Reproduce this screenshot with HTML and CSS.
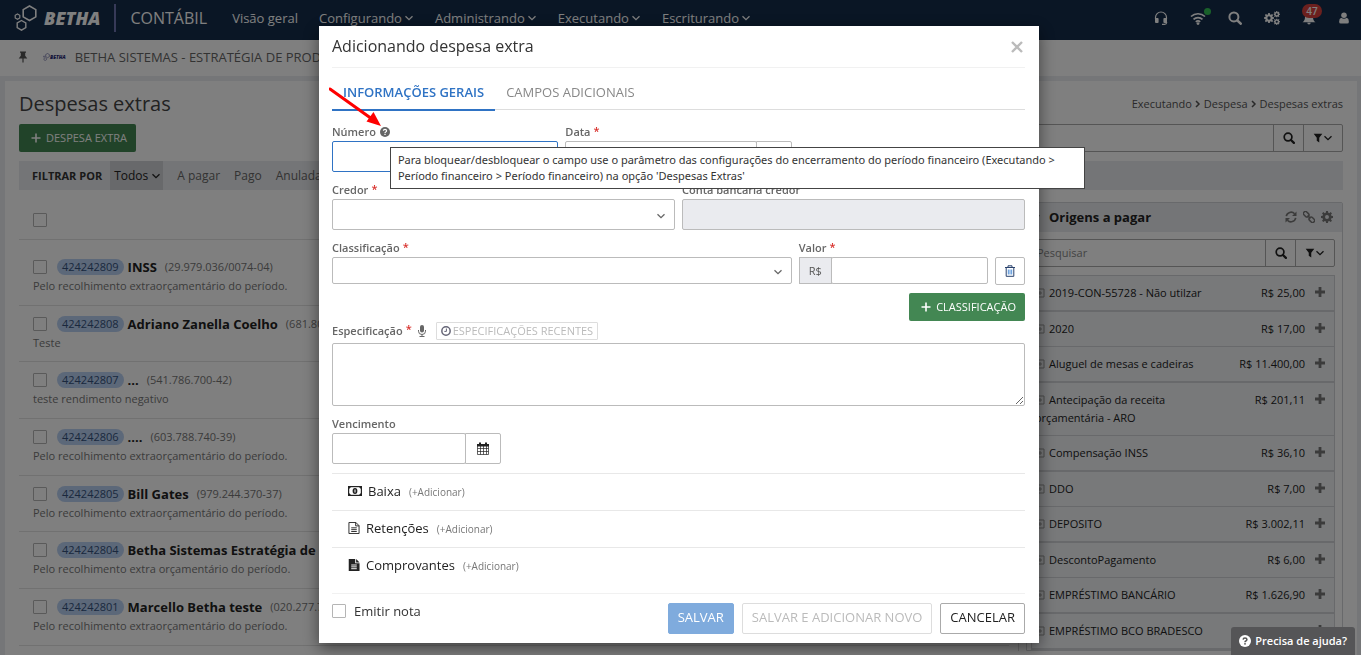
FILE: index.html
```html
<!DOCTYPE html>
<html lang="pt-BR">
<head>
<meta charset="utf-8">
<meta name="viewport" content="width=device-width, initial-scale=1">
<title>Despesas extras - Contábil</title>
<link rel="stylesheet" href="styles.css">
</head>
<body>
<svg class="sprite" aria-hidden="true">
  <symbol id="chevron" viewBox="0 0 10 10"><path d="M1.500 3.200 5 6.700 8.500 3.200" fill="none" stroke="currentColor" stroke-width="1.300"/></symbol>
  <symbol id="crumb" viewBox="0 0 8 10"><path d="M2 2 5 5 2 8" fill="none" stroke="currentColor" stroke-width="1.500"/></symbol>
  <symbol id="plus" viewBox="0 0 10 10"><path d="M5 .5v9M.5 5h9" fill="none" stroke="currentColor" stroke-width="1.600"/></symbol>
  <symbol id="plus-bold" viewBox="0 0 10 10"><path d="M5 0v10M0 5h10" fill="none" stroke="currentColor" stroke-width="2.800"/></symbol>
  <symbol id="search" viewBox="0 0 14 14"><circle cx="5.900" cy="5.900" r="4.500" fill="none" stroke="currentColor" stroke-width="2"/><path d="m9.300 9.300 3.400 3.400" stroke="currentColor" stroke-width="2.600" stroke-linecap="round"/></symbol>
  <symbol id="filter" viewBox="0 0 12 12"><path d="M.8 1h10.400L7.500 5.600V11.500L4.500 9.200V5.600Z" fill="currentColor"/></symbol>
  <symbol id="hexes" viewBox="0 0 24 26"><g fill="none" stroke="currentColor"><path d="m15.500 1 6.300 3.600v7.300l-6.300 3.600-6.300-3.600V4.600Z" stroke-width="1.600"/><path d="m7.500 15.500 4.300 2.500v4.700l-4.300 2.500-4.300-2.500V18Z" stroke-width="1.400"/><path d="m3.500 9 2.300 1.300v2.600l-2.300 1.300-2.300-1.300v-2.600Z" stroke-width="1.200"/></g></symbol>
  <symbol id="gear" viewBox="0 0 14 14"><path fill="currentColor" fill-rule="evenodd" d="M5.900 0h2.200l.4 2 1.100.5L11.300 1.300l1.500 1.500L11.600 4.500l.5 1.100 1.900.3v2.200l-1.900.4-.5 1.100 1.200 1.700-1.500 1.500-1.700-1.200-1.100.5-.4 1.900H5.900l-.4-1.900-1.100-.5-1.700 1.200-1.500-1.500 1.200-1.700-.5-1.100L0 8.100V5.900l1.900-.3.5-1.100L1.200 2.800l1.500-1.500 1.700 1.200 1.100-.5ZM7 4.700a2.300 2.300 0 1 0 0 4.600 2.300 2.300 0 0 0 0-4.600Z"/></symbol>
  <symbol id="box-plus" viewBox="0 0 10 10"><path d="M1 1h8v8H1ZM5 3v4M3 5h4" fill="none" stroke="currentColor"/></symbol>
</svg>

<header class="topbar">
  <a class="brand" href="#"><svg class="brand-mark"><use href="#hexes"/></svg><span class="brand-name">BETHA</span></a>
  <span class="product">CONTÁBIL</span>
  <nav class="menu">
    <a href="#">Visão geral</a>
    <a href="#">Configurando<svg class="i10"><use href="#chevron"/></svg></a>
    <a href="#">Administrando<svg class="i10"><use href="#chevron"/></svg></a>
    <a href="#">Executando<svg class="i10"><use href="#chevron"/></svg></a>
    <a href="#">Escriturando<svg class="i10"><use href="#chevron"/></svg></a>
  </nav>
  <div class="tools">
    <button type="button" aria-label="Suporte"><svg class="i14" viewBox="0 0 14 14"><path d="M1.500 8V6.500a5.500 5.500 0 0 1 11 0V8M12.600 11v.8q0 1.500-2 1.500H8" fill="none" stroke="currentColor" stroke-width="1.200"/><rect x="1" y="7" width="3.600" height="5" rx="1" fill="currentColor"/><rect x="9.400" y="7" width="3.600" height="5" rx="1" fill="currentColor"/></svg></button>
    <button type="button" aria-label="Conexão"><svg class="i16" viewBox="0 0 16 14"><path d="M1 5.500a10.300 10.300 0 0 1 14 0M3.500 8.300a6.600 6.600 0 0 1 9 0M5.800 10.800a3.300 3.300 0 0 1 4.400 0" fill="none" stroke="currentColor" stroke-width="1.700"/><circle cx="8" cy="12.600" r="1.400" fill="currentColor"/></svg><span class="dot"></span></button>
    <button type="button" aria-label="Buscar"><svg class="i14"><use href="#search"/></svg></button>
    <button type="button" aria-label="Configurações"><svg class="i16" viewBox="0 0 16 14"><use href="#gear" x="0" y="2" width="10" height="10"/><use href="#gear" x="9.500" y="0" width="6.500" height="6.500"/><use href="#gear" x="9.500" y="7.500" width="6.500" height="6.500"/></svg></button>
    <button type="button" aria-label="Notificações"><svg class="i14" viewBox="0 0 14 14"><path d="M7 1.500c3 0 4 2 4 4.500 0 3 1 4.200 2.500 5.200H.5C2 10.200 3 9 3 6c0-2.500 1-4.500 4-4.500ZM5.300 11.800h3.400a1.700 1.700 0 0 1-3.400 0Z" fill="currentColor"/></svg><span class="count">47</span></button>
    <button type="button" aria-label="Usuário"><svg class="i12" viewBox="0 0 12 13"><circle cx="6" cy="3.500" r="3" fill="currentColor"/><path d="M3 6.200q3 2.200 6 0 2.300.8 2.300 4.300 0 2-1.800 2h-7q-1.800 0-1.800-2Q.7 7 3 6.200Z" fill="currentColor"/></svg></button>
  </div>
</header>

<div class="entity">
  <svg class="i12" viewBox="0 0 12 12"><path d="M3 .5h6v1.300H8.200v3L10.300 7.500H6.600v4H5.400v-4H1.700l2.100-2.700v-3H3Z" fill="currentColor"/></svg>
  <span class="mini-logo"><svg class="mini-mark"><use href="#hexes"/></svg><b>BETHA</b></span>
  <span class="entity-name">BETHA SISTEMAS - ESTRATÉGIA DE PRODUTO</span>
</div>

<main class="page">
  <div class="page-head">
    <h1>Despesas extras</h1>
    <nav class="crumbs"><a href="#">Executando</a><svg><use href="#crumb"/></svg><a href="#">Despesa</a><svg><use href="#crumb"/></svg><a href="#">Despesas extras</a></nav>
  </div>
  <div class="toolbar">
    <button type="button" class="btn btn-green"><svg class="i10"><use href="#plus"/></svg>DESPESA EXTRA</button>
    <div class="search wide">
      <input type="search" aria-label="Pesquisar despesas">
      <button type="button" aria-label="Pesquisar"><svg class="i12"><use href="#search"/></svg></button>
      <button type="button" class="flt" aria-label="Filtros"><svg class="i10"><use href="#filter"/></svg><svg class="i10"><use href="#chevron"/></svg></button>
    </div>
  </div>
  <div class="filters">
    <strong>FILTRAR POR</strong>
    <button type="button" class="on">Todos<svg class="i10"><use href="#chevron"/></svg></button>
    <button type="button">A pagar</button>
    <button type="button">Pago</button>
    <button type="button">Anulada</button>
  </div>

  <div class="columns">
    <section class="list">
      <div class="list-head"><input type="checkbox" aria-label="Selecionar todas"></div>
      <ul class="rows">
        <li><div class="row-top"><input type="checkbox" aria-label="424242809"><span class="tag">424242809</span><b>INSS</b><span class="doc">(29.979.036/0074-04)</span></div><p>Pelo recolhimento extraorçamentário do período.</p></li>
        <li><div class="row-top"><input type="checkbox" aria-label="424242808"><span class="tag">424242808</span><b>Adriano Zanella Coelho</b><span class="doc">(681.803.210-04)</span></div><p>Teste</p></li>
        <li><div class="row-top"><input type="checkbox" aria-label="424242807"><span class="tag">424242807</span><b>...</b><span class="doc">(541.786.700-42)</span></div><p>teste rendimento negativo</p></li>
        <li><div class="row-top"><input type="checkbox" aria-label="424242806"><span class="tag">424242806</span><b>....</b><span class="doc">(603.788.740-39)</span></div><p>Pelo recolhimento extraorçamentário do período.</p></li>
        <li><div class="row-top"><input type="checkbox" aria-label="424242805"><span class="tag">424242805</span><b>Bill Gates</b><span class="doc">(979.244.370-37)</span></div><p>Pelo recolhimento extraorçamentário do período.</p></li>
        <li><div class="row-top"><input type="checkbox" aria-label="424242804"><span class="tag">424242804</span><b>Betha Sistemas Estratégia de ...</b></div><p>Pelo recolhimento extra orçamentário do período.</p></li>
        <li><div class="row-top"><input type="checkbox" aria-label="424242801"><span class="tag">424242801</span><b>Marcello Betha teste</b><span class="doc">(020.277.710-50)</span></div><p>Pelo recolhimento extraorçamentário do período.</p></li>
      </ul>
    </section>

    <aside class="origins">
      <div class="origins-head">
        <svg class="i10"><use href="#chevron"/></svg>
        <h2>Origens a pagar</h2>
        <button type="button" aria-label="Atualizar"><svg class="i12" viewBox="0 0 12 12"><path d="M1.300 5.200A4.800 4.800 0 0 1 9.600 2.800M10.700 6.800A4.800 4.800 0 0 1 2.400 9.200" fill="none" stroke="currentColor" stroke-width="1.600"/><path d="M11.500.5V5H7ZM.5 11.500V7H5Z" fill="currentColor"/></svg></button>
        <button type="button" aria-label="Vínculos"><svg class="i12" viewBox="0 0 12 12"><g fill="none" stroke="currentColor" stroke-width="1.500" transform="rotate(45 6 6)"><rect x="-1" y="4" width="6" height="4" rx="1.800"/><rect x="7" y="4" width="6" height="4" rx="1.800"/><path d="M4 6h4"/></g></svg></button>
        <button type="button" aria-label="Configurar"><svg class="i12"><use href="#gear"/></svg></button>
      </div>
      <div class="search">
        <input type="search" placeholder="Pesquisar" aria-label="Pesquisar origens">
        <button type="button" aria-label="Pesquisar"><svg class="i12"><use href="#search"/></svg></button>
        <button type="button" class="flt" aria-label="Filtros"><svg class="i10"><use href="#filter"/></svg><svg class="i10"><use href="#chevron"/></svg></button>
      </div>
      <ul class="accounts">
        <li><span class="acc"><svg class="i10"><use href="#box-plus"/></svg>2019-CON-55728 - Não utilzar</span><span>R$ 25,00</span><button type="button" aria-label="Adicionar"><svg class="i10"><use href="#plus-bold"/></svg></button></li>
        <li><span class="acc"><svg class="i10"><use href="#box-plus"/></svg>2020</span><span>R$ 17,00</span><button type="button" aria-label="Adicionar"><svg class="i10"><use href="#plus-bold"/></svg></button></li>
        <li><span class="acc"><svg class="i10"><use href="#box-plus"/></svg>Aluguel de mesas e cadeiras</span><span>R$ 11.400,00</span><button type="button" aria-label="Adicionar"><svg class="i10"><use href="#plus-bold"/></svg></button></li>
        <li><span class="acc"><svg class="i10"><use href="#box-plus"/></svg>Antecipação da receita orçamentária - ARO</span><span>R$ 201,11</span><button type="button" aria-label="Adicionar"><svg class="i10"><use href="#plus-bold"/></svg></button></li>
        <li><span class="acc"><svg class="i10"><use href="#box-plus"/></svg>Compensação INSS</span><span>R$ 36,10</span><button type="button" aria-label="Adicionar"><svg class="i10"><use href="#plus-bold"/></svg></button></li>
        <li><span class="acc"><svg class="i10"><use href="#box-plus"/></svg>DDO</span><span>R$ 7,00</span><button type="button" aria-label="Adicionar"><svg class="i10"><use href="#plus-bold"/></svg></button></li>
        <li><span class="acc"><svg class="i10"><use href="#box-plus"/></svg>DEPOSITO</span><span>R$ 3.002,11</span><button type="button" aria-label="Adicionar"><svg class="i10"><use href="#plus-bold"/></svg></button></li>
        <li><span class="acc"><svg class="i10"><use href="#box-plus"/></svg>DescontoPagamento</span><span>R$ 6,00</span><button type="button" aria-label="Adicionar"><svg class="i10"><use href="#plus-bold"/></svg></button></li>
        <li><span class="acc"><svg class="i10"><use href="#box-plus"/></svg>EMPRÉSTIMO BANCÁRIO</span><span>R$ 1.626,90</span><button type="button" aria-label="Adicionar"><svg class="i10"><use href="#plus-bold"/></svg></button></li>
        <li><span class="acc"><svg class="i10"><use href="#box-plus"/></svg>EMPRÉSTIMO BCO BRADESCO</span><span>R$ 11.500,43</span><button type="button" aria-label="Adicionar"><svg class="i10"><use href="#plus-bold"/></svg></button></li>
      </ul>
    </aside>
  </div>
</main>

<div class="overlay">
  <form class="modal" role="dialog" aria-labelledby="dlg-title">
    <div class="modal-head">
      <h2 id="dlg-title">Adicionando despesa extra</h2>
      <button type="button" class="close" aria-label="Fechar"><svg class="i12" viewBox="0 0 12 12"><path d="m1 1 10 10M11 1 1 11" stroke="currentColor" stroke-width="2.400"/></svg></button>
    </div>
    <div class="tabs" role="tablist">
      <button type="button" role="tab" class="active" aria-selected="true">INFORMAÇÕES GERAIS</button>
      <button type="button" role="tab" aria-selected="false">CAMPOS ADICIONAIS</button>
    </div>

    <div class="fields">
      <div class="field c2">
        <div class="label-line"><label for="numero">Número</label>
          <span class="help"><svg class="i10" viewBox="0 0 12 12"><circle cx="6" cy="6" r="6" fill="currentColor"/><path d="M4.100 4.600Q4.200 2.900 6 2.900t1.900 1.500Q7.900 5.400 6.800 6q-.8.400-.8 1.200" fill="none" stroke="#fff" stroke-width="1.500"/><rect x="5.200" y="8.100" width="1.600" height="1.500" fill="#fff"/></svg>
            <svg class="arrow" viewBox="0 0 56 42"><path d="m1 2 42 30" stroke="#fe0000" stroke-width="3" stroke-linecap="round"/><path d="m52 39-14.500-4.500L44.500 25Z" fill="#fe0000"/></svg>
            <span class="tooltip" role="tooltip">Para bloquear/desbloquear o campo use o parâmetro das configurações do encerramento do período financeiro (Executando &gt; Período financeiro &gt; Período financeiro) na opção 'Despesas Extras'</span>
          </span>
        </div>
        <input id="numero" type="text" class="focused">
      </div>
      <div class="field c2">
        <div class="label-line"><label for="data">Data</label><sup>*</sup></div>
        <div class="group"><input id="data" type="text"><button type="button" aria-label="Calendário"></button></div>
      </div>
      <div class="field c3 row2">
        <div class="label-line"><label for="credor">Credor</label><sup>*</sup></div>
        <div class="select"><select id="credor"><option></option></select><svg class="i10"><use href="#chevron"/></svg></div>
      </div>
      <div class="field c3">
        <div class="label-line"><label for="conta">Conta bancária credor</label></div>
        <input id="conta" type="text" disabled>
      </div>
      <div class="field c4 low">
        <div class="label-line"><label for="classif">Classificação</label><sup>*</sup></div>
        <div class="select"><select id="classif"><option></option></select><svg class="i10"><use href="#chevron"/></svg></div>
      </div>
      <div class="field c2 low">
        <div class="label-line"><label for="valor">Valor</label><sup>*</sup></div>
        <div class="value-row">
          <div class="group"><span class="prefix">R$</span><input id="valor" type="text"></div>
          <button type="button" class="trash" aria-label="Remover"><svg class="i12" viewBox="0 0 12 12"><path d="M1 2.500h10M4 2.300V.8h4v1.500M2.200 3v8.300h7.600V3" fill="none" stroke="currentColor"/><path d="M4.300 4.500v5M6 4.500v5M7.700 4.500v5" stroke="#4f8fd8"/></svg></button>
        </div>
      </div>
      <div class="add-row"><button type="button" class="btn btn-green"><svg class="i10"><use href="#plus"/></svg>CLASSIFICAÇÃO</button></div>
      <div class="field c6">
        <div class="label-line spec"><label for="espec">Especificação</label><sup>*</sup>
          <svg class="i12 mic" viewBox="0 0 12 12"><rect x="4" y="0" width="4" height="7.500" rx="2" fill="currentColor"/><path d="M2.500 5v1.200a3.500 3.300 0 0 0 7 0V5M6 9.500v2M3.500 11.500h5" fill="none" stroke="currentColor"/></svg>
          <button type="button" class="recent" disabled><svg class="i10" viewBox="0 0 12 12"><circle cx="6" cy="6" r="5" fill="none" stroke="currentColor" stroke-width="1.800"/><path d="M6.500 3v3.500H4" fill="none" stroke="currentColor" stroke-width="1.200"/></svg>ESPECIFICAÇÕES RECENTES</button>
        </div>
        <textarea id="espec"></textarea>
      </div>
      <div class="field c6">
        <div class="label-line"><label for="venc">Vencimento</label></div>
        <div class="group short"><input id="venc" type="text"><button type="button" aria-label="Calendário"><svg class="i14" viewBox="0 0 14 14"><path d="M1.500 3.500h11v9h-11ZM1.500 6.500h11M1.500 9.500h11M4.500 4v8.500M7.500 4v8.500M10.500 4v8.500" fill="none" stroke="currentColor" stroke-width=".7"/><path d="M1 2h12v2.500H1ZM3 .5h2v2H3ZM9 .5h2v2H9Z" fill="currentColor"/></svg></button></div>
      </div>
    </div>

    <div class="extras">
      <div><svg class="i14" viewBox="0 0 14 14"><rect x=".6" y="2.600" width="12.800" height="8.800" fill="none" stroke="currentColor" stroke-width="1.200"/><ellipse cx="7" cy="7" rx="2.400" ry="3" fill="currentColor"/><path d="M7 5.500v3" stroke="#fff"/><path d="M1 3h2L1 5ZM13 3h-2l2 2ZM1 11h2L1 9ZM13 11h-2l2-2Z" fill="currentColor"/></svg><span>Baixa</span><a href="#">(+Adicionar)</a></div>
      <div><svg class="i12" viewBox="0 0 12 13"><path d="M.5.500h7.500L11.500 4v8.500H.5ZM7.800.5V4.200h3.700M3 6.300h6M3 8.300h6M3 10.300h6" fill="none" stroke="currentColor"/></svg><span>Retenções</span><a href="#">(+Adicionar)</a></div>
      <div><svg class="i12" viewBox="0 0 12 13"><path d="M.3 0h7v4.700H12V13H.3ZM8.300 0 12 3.700H8.300Z" fill="currentColor"/><path d="M3 6.500h6M3 8.500h6M3 10.500h6" stroke="#fff"/></svg><span>Comprovantes</span><a href="#">(+Adicionar)</a></div>
    </div>

    <div class="modal-foot">
      <label class="check"><input type="checkbox">Emitir nota</label>
      <button type="submit" class="btn save" disabled>SALVAR</button>
      <button type="button" class="btn ghost" disabled>SALVAR E ADICIONAR NOVO</button>
      <button type="button" class="btn cancel">CANCELAR</button>
    </div>
  </form>
</div>

<button type="button" class="help-tab"><svg class="i12" viewBox="0 0 12 12"><circle cx="6" cy="6" r="6" fill="currentColor"/><path d="M4.100 4.600Q4.200 2.900 6 2.900t1.900 1.500Q7.900 5.400 6.800 6q-.8.400-.8 1.200" fill="none" stroke="#555" stroke-width="1.500"/><rect x="5.200" y="8.100" width="1.600" height="1.500" fill="#555"/></svg>Precisa de ajuda?</button>
</body>
</html>
```
FILE: styles.css
```css
* { box-sizing: border-box; }

html, body { height: 100%; overflow: hidden; }

body {
  margin: 0;
  display: flex;
  flex-direction: column;
  background: #ebedf1;
  color: #222;
  font: 11px/18px "Open Sans", "Noto Sans", sans-serif;
}

h1, h2, p, ul { margin: 0; padding: 0; font-weight: 400; }
ul { list-style: none; }
a { color: inherit; text-decoration: none; }
button, input, select, textarea { font: inherit; color: inherit; margin: 0; }
button { display: inline-flex; align-items: center; justify-content: center; padding: 0; border: 0; background: none; }
svg { flex: none; }

.sprite { display: none; }
.i10 { width: 10px; height: 10px; }
.i12 { width: 12px; height: 12px; }
.i14 { width: 14px; height: 14px; }
.i16 { width: 16px; height: 14px; }

input[type="checkbox"] {
  appearance: none;
  flex: none;
  width: 14px;
  height: 14px;
  border: 1px solid #b5b5b5;
  border-radius: 1px;
  background: #fff;
}

/* Top bar */
.topbar {
  flex: none;
  display: flex;
  align-items: center;
  height: 40px;
  padding: 0 11px 4px 14px;
  background: #142c4a;
  color: #fff;
}
.brand { display: flex; align-items: center; gap: 6px; height: 28px; padding-right: 14px; border-right: 2px solid #6f74b0; }
.brand-mark { width: 24px; height: 26px; }
.brand-name { font: italic 800 18px/24px "Open Sans", sans-serif; }
.product { padding-left: 14px; font-size: 16px; }
.menu { display: flex; gap: 21px; margin-left: 25px; font-size: 13px; }
.menu a { display: flex; align-items: center; gap: 2px; }
.tools { display: flex; align-items: center; gap: 22px; margin-left: auto; }
.tools button { position: relative; }
.dot { position: absolute; right: -5px; top: -3px; width: 7px; height: 7px; border-radius: 50%; background: #33c254; }
.count { position: absolute; left: 0; top: -7px; min-width: 20px; border-radius: 8px; background: #d9413d; font-size: 10px; line-height: 14px; font-weight: 600; }

.entity {
  flex: none;
  display: flex;
  align-items: center;
  height: 36px;
  padding: 0 17px 2px;
  background: #fff;
  color: #555;
}
.mini-logo { display: flex; align-items: center; margin: 0 9px 0 14px; color: #2b2d78; font-size: 5px; line-height: 8px; font-style: italic; font-weight: 800; }
.mini-mark { width: 7px; height: 8px; }
.entity-name { font-size: 13px; color: #666; white-space: nowrap; }

/* Page */
.page { flex: 1; min-height: 0; overflow: hidden; margin: 5px 4px 0 5px; padding: 9px 14px 0; background: #fff; }
.page-head { display: flex; align-items: center; justify-content: space-between; }
h1 { font-size: 20px; line-height: 28px; color: #444; }
.crumbs { display: flex; align-items: center; gap: 2px; height: 24px; color: #555; }
.crumbs svg { width: 8px; height: 10px; }

.toolbar { display: flex; margin-top: 6px; }
.btn { height: 31px; border-radius: 2px; }
.btn-green { height: 28px; padding: 0 9px 0 12px; gap: 5px; background: #438753; color: #fff; }
.search { display: flex; height: 28px; border: 1px solid #aaa; border-radius: 2px; background: #fff; }
.search.wide { flex: 1; margin-left: 400px; }
.search input { flex: 1; min-width: 0; border: 0; padding: 0 5px; background: none; }
.search input::placeholder { color: #888; }
.search button { width: 30px; border-left: 1px solid #aaa; }
.search .flt { width: 39px; }

.filters { display: flex; align-items: stretch; height: 29px; margin-top: 9px; padding-left: 13px; background: #e9ebee; color: #666; font-size: 12px; }
.filters strong { align-self: center; margin-right: 8px; color: #333; font-size: 11px; }
.filters button { margin-right: 14px; }
.filters .on { padding: 0 2px 0 4px; gap: 3px; background: #d0d2d6; color: #222; }

.columns { display: grid; grid-template-columns: minmax(0, 1fr) 317px; gap: 7px; margin-top: 12px; }
.list { padding-right: 9px; border-right: 1px solid #d8d8d8; }
.list-head { display: flex; height: 38px; padding: 11px 14px 0; border-bottom: 1px solid #e2e2e2; }
.rows li { height: 57px; padding: 9px 14px 0; border-bottom: 1px solid #e2e2e2; }
.rows li:nth-child(3n+2) { height: 56px; }
.rows li:first-child { height: 66px; padding-top: 18px; }
.row-top { display: flex; align-items: center; height: 17px; white-space: nowrap; }
.tag { margin: 0 4px 0 10px; padding: 0 5px; border-radius: 8px; background: #b9d0f2; color: #34507c; line-height: 16px; }
.row-top b { font-size: 13px; font-weight: 700; color: #222; }
.doc { margin-left: 8px; color: #777; }
.rows p { margin-top: 2px; color: #777; }

.origins { border: 1px solid #d0d2d6; border-radius: 2px 2px 0 0; }
.origins-head { display: flex; align-items: center; gap: 6px; height: 29px; padding: 0 9px 1px 4px; background: #e9ebee; color: #777; }
.origins h2 { flex: 1; margin-left: 2px; font-size: 13px; font-weight: 700; color: #222; }
.origins .search { margin: 7px 7px 0 4px; }
.accounts { margin: 8px 7px 0 4px; border: 1px solid #d0d2d6; background: #f0f2f5; }
.accounts li { display: flex; padding: 8px 8px 8px 3px; border-bottom: 1px solid #d0d2d6; color: #222; }
.accounts li:nth-child(odd) { border-bottom-width: 2px; }
.acc { flex: 1; margin-right: 20px; }
.acc svg { margin-right: 4px; color: #999; vertical-align: -1px; }
.accounts span + span { flex: none; }
.accounts button { width: 12px; height: 16px; margin-left: 9px; color: #777; }

/* Dialog */
.overlay {
  position: fixed;
  inset: 0;
  overflow: auto;
  padding: 26px 3px 0 0;
  background: rgba(0, 0, 0, .5);
}
.modal { width: 100%; max-width: 720px; margin: 0 auto; padding: 0 14px 9px 13px; background: #fff; box-shadow: 0 5px 15px rgba(0, 0, 0, .5); }
.modal-head { display: flex; align-items: center; justify-content: space-between; height: 42px; border-bottom: 1px solid #f1f1f1; }
.modal-head h2 { padding-bottom: 2px; font-size: 16px; line-height: 38px; color: #333; }
.close { padding-right: 2px; color: #bbb; }
.tabs { display: flex; height: 42px; border-bottom: 1px solid #ddd; font-size: 13px; }
.tabs button { margin-bottom: -2px; padding: 6px 11px 0; border-bottom: 2px solid transparent; color: #888; }
.tabs .active { border-color: #2f73c4; color: #2f73c4; font-weight: 600; }

.fields { display: grid; grid-template-columns: repeat(6, minmax(0, 1fr)); column-gap: 7px; margin-top: 13px; }
.field { display: flex; flex-direction: column; margin-bottom: 9px; }
.c2 { grid-column: span 2; }
.row2 { grid-column: 1 / span 3; }
.c3 { grid-column-end: span 3; }
.c4 { grid-column: span 4; }
.c6 { grid-column: span 6; }
.label-line { display: flex; align-items: center; height: 18px; color: #666; font-weight: 600; }
sup { align-self: flex-start; margin-left: 3px; font-size: 11px; line-height: 16px; color: #d9322e; }
.field input, .field select, .field textarea { width: 100%; height: 31px; border: 1px solid #bbb; border-radius: 2px; background: #fff; padding: 0 6px; }
.field .focused { border-color: #2f73c4; outline: 0; }
.field input:disabled { background: #eaebef; }
.select { position: relative; }
.select select { display: block; appearance: none; }
.select svg { position: absolute; right: 9px; top: 50%; margin-top: -4px; color: #666; }
.group { display: flex; flex: 1; }
.group input { flex: 1; min-width: 0; }
.group button { width: 36px; height: 31px; margin-left: -1px; border: 1px solid #bbb; border-radius: 0 2px 2px 0; background: #fff; color: #222; }
.group.short { flex: none; align-self: flex-start; width: 169px; }
.field.low input, .field.low select { height: 27px; }
.field.low { margin-bottom: 8px; }
.value-row { display: flex; gap: 7px; align-items: flex-start; }
.prefix { display: flex; align-items: center; width: 33px; margin-right: -1px; padding-left: 9px; border: 1px solid #bbb; background: #eaebef; color: #555; }
.trash { width: 30px; height: 28px; border: 1px solid #bbb; border-radius: 2px; color: #29426d; }
.add-row { grid-column: span 6; display: flex; justify-content: flex-end; }
.spec { height: 22px; padding-bottom: 2px; }
.mic { margin: 0 8px 0 4px; }
.recent { height: 18px; padding: 0 4px; gap: 2px; border: 1px solid #ddd; border-radius: 1px; color: #bbb; font-weight: 400; }
.recent svg { color: #667; }
.field textarea { display: block; height: 63px; }

.help { position: relative; display: flex; margin-left: 4px; }
.arrow { position: absolute; z-index: 2; left: -51px; top: -40px; width: 56px; height: 42px; }
.tooltip {
  position: absolute;
  z-index: 1;
  left: 10px;
  top: 20px;
  width: 695px;
  padding: 4px 7px;
  border: 1px solid #444;
  background: #fff;
  color: #333;
  font: 11px/16px "Noto Sans", "Open Sans", sans-serif;
}

.extras { font-size: 13px; color: #222; }
.extras div { display: flex; align-items: center; gap: 6px; height: 37px; padding: 0 0 2px 16px; border-top: 1px solid #e8e8e8; }
.extras a { margin-left: 2px; padding-top: 2px; font-size: 10px; color: #777; }

.modal-foot { display: flex; align-items: center; gap: 8px; margin-top: 9px; padding-top: 8px; border-top: 1px solid #f1f1f1; }
.check { display: flex; align-items: center; gap: 8px; margin-right: auto; padding-bottom: 14px; font-size: 13px; color: #333; }
.modal-foot .btn { padding: 0 9px 2px; border: 1px solid #aaa; font-size: 13px; color: #222; }
.modal-foot .save { border-color: #7fabdd; background: #7fabdd; color: #fff; }
.modal-foot .ghost { border-color: #ddd; color: #bbb; }

.help-tab {
  position: fixed;
  right: 6px;
  bottom: 0;
  height: 28px;
  padding: 0 8px;
  gap: 4px;
  border-radius: 3px 3px 0 0;
  background: #555557;
  color: #fff;
  font-weight: 600;
}
```
